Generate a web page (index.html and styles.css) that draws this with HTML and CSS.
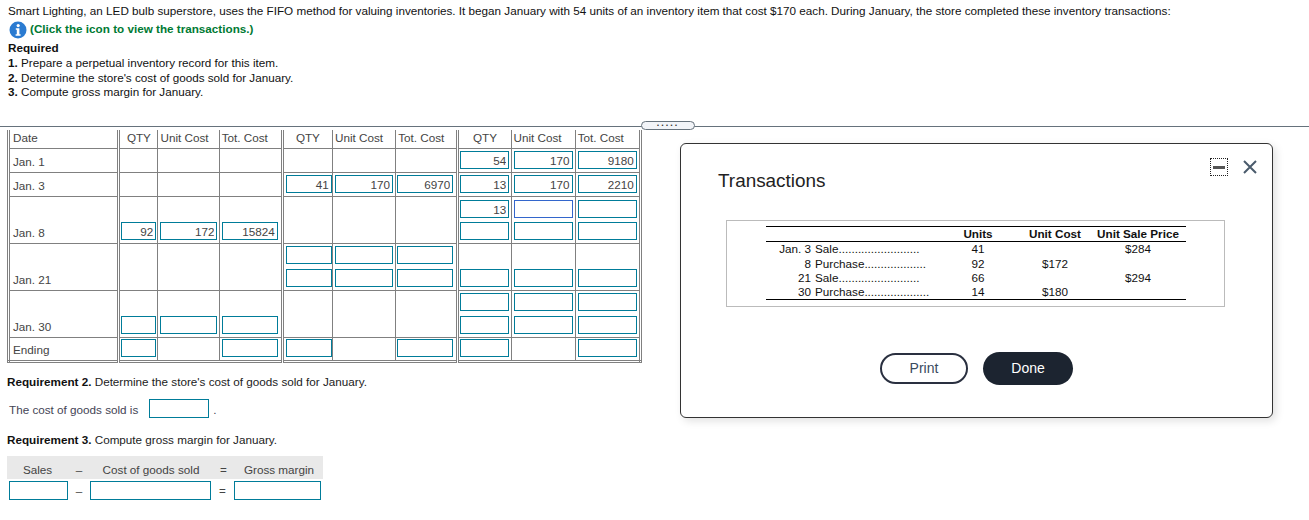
FILE: index.html
```html
<!DOCTYPE html>
<html lang="en">
<head>
<meta charset="utf-8">
<title>Smart Lighting inventory</title>
<link rel="stylesheet" href="styles.css">
</head>
<body>
<section class="question">
  <p class="intro">Smart Lighting, an LED bulb superstore, uses the FIFO method for valuing inventories. It began January with 54 units of an inventory item that cost $170 each. During January, the store completed these inventory transactions:</p>
  <p class="hint">
    <svg class="info" viewBox="0 0 18 18" aria-hidden="true"><circle cx="9" cy="9" r="8.5" fill="#2a7bd1"/><circle cx="9.2" cy="4.6" r="1.6" fill="#fff"/><path d="M6.8 7.2h3.6v6h1.2v1.5H6.6v-1.5h1.2V8.7h-1z" fill="#fff"/></svg>
    <b>(Click the icon to view the transactions.)</b>
  </p>
  <p class="req-title">Required</p>
  <ol class="req-list">
    <li><b>1.</b> Prepare a perpetual inventory record for this item.</li>
    <li><b>2.</b> Determine the store's cost of goods sold for January.</li>
    <li><b>3.</b> Compute gross margin for January.</li>
  </ol>
</section>

<div class="divider"><span class="handle">.....</span></div>

<section class="work">
  <table class="record">
    <colgroup>
      <col class="c-date"><col class="c-q1"><col class="c-u1"><col class="c-t1"><col class="c-q2"><col class="c-u2"><col class="c-t2"><col class="c-q3"><col class="c-u3"><col class="c-t3">
    </colgroup>
    <thead>
      <tr class="r-head">
        <th class="date">Date</th><th class="qty sec">QTY</th><th>Unit Cost</th><th>Tot. Cost</th>
        <th class="qty sec">QTY</th><th>Unit Cost</th><th>Tot. Cost</th>
        <th class="qty sec">QTY</th><th>Unit Cost</th><th>Tot. Cost</th>
      </tr>
    </thead>
    <tbody>
      <tr class="r-one">
        <td class="date">Jan. 1</td><td class="sec"></td><td></td><td></td><td class="sec"></td><td></td><td></td>
        <td class="sec"><input class="w-q3" value="54"></td><td><input class="w-u3" value="170"></td><td><input class="w-t3" value="9180"></td>
      </tr>
      <tr class="r-one">
        <td class="date">Jan. 3</td><td class="sec"></td><td></td><td></td>
        <td class="sec"><input class="w-q2" value="41"></td><td><input class="w-u2" value="170"></td><td><input class="w-t2" value="6970"></td>
        <td class="sec"><input class="w-q3" value="13"></td><td><input class="w-u3" value="170"></td><td><input class="w-t3" value="2210"></td>
      </tr>
      <tr class="r-two">
        <td class="date">Jan. 8</td>
        <td class="sec"><input class="w-q1" value="92"></td><td><input class="w-u1" value="172"></td><td><input class="w-t1" value="15824"></td>
        <td class="sec"></td><td></td><td></td>
        <td class="sec"><div class="stack"><input class="w-q3" value="13"><input class="w-q3"></div></td>
        <td><div class="stack"><input class="w-u3 focus"><input class="w-u3"></div></td>
        <td><div class="stack"><input class="w-t3"><input class="w-t3"></div></td>
      </tr>
      <tr class="r-two">
        <td class="date">Jan. 21</td><td class="sec"></td><td></td><td></td>
        <td class="sec"><div class="stack wide"><input class="w-q2"><input class="w-q2"></div></td>
        <td><div class="stack wide"><input class="w-u2"><input class="w-u2"></div></td>
        <td><div class="stack wide"><input class="w-t2"><input class="w-t2"></div></td>
        <td class="sec"><input class="w-q3"></td><td><input class="w-u3"></td><td><input class="w-t3"></td>
      </tr>
      <tr class="r-two">
        <td class="date">Jan. 30</td>
        <td class="sec"><input class="w-q1"></td><td><input class="w-u1"></td><td><input class="w-t1"></td>
        <td class="sec"></td><td></td><td></td>
        <td class="sec"><div class="stack wide"><input class="w-q3"><input class="w-q3"></div></td>
        <td><div class="stack wide"><input class="w-u3"><input class="w-u3"></div></td>
        <td><div class="stack wide"><input class="w-t3"><input class="w-t3"></div></td>
      </tr>
      <tr class="r-one r-last">
        <td class="date">Ending</td>
        <td class="sec"><input class="w-q1"></td><td></td><td><input class="w-t1"></td>
        <td class="sec"><input class="w-q2"></td><td></td><td><input class="w-t2"></td>
        <td class="sec"><input class="w-q3"></td><td></td><td><input class="w-t3"></td>
      </tr>
    </tbody>
  </table>

  <p class="req-head"><b>Requirement 2.</b> Determine the store's cost of goods sold for January.</p>
  <p class="cogs"><span class="cogs-label">The cost of goods sold is</span><input class="w-cogs"><span class="period">.</span></p>
  <p class="req-head req-3"><b>Requirement 3.</b> Compute gross margin for January.</p>
  <div class="margin">
    <span class="m-sales">Sales</span><span class="m-op">&ndash;</span><span class="m-cogs">Cost of goods sold</span><span class="m-eq">=</span><span class="m-gross">Gross margin</span>
  </div>
  <div class="margin-in">
    <input class="i-sales"><span class="m-op">&ndash;</span><input class="i-cogs"><span class="m-eq">=</span><input class="i-gross">
  </div>
</section>

<aside class="modal">
  <div class="controls">
    <span class="min"><i></i></span>
    <svg class="close" viewBox="0 0 14 14" aria-hidden="true"><path d="M1 1l12 12M13 1L1 13" stroke="#4a5b6c" stroke-width="2" fill="none"/></svg>
  </div>
  <h2>Transactions</h2>
  <div class="tx-box">
    <table class="tx">
      <thead>
        <tr><th class="tx-a"></th><th class="tx-b"></th><th class="tx-u">Units</th><th class="tx-c">Unit Cost</th><th class="tx-p">Unit Sale Price</th></tr>
      </thead>
      <tbody>
        <tr><td class="tx-a">Jan. 3</td><td class="tx-b">Sale.........................</td><td class="tx-u">41</td><td class="tx-c"></td><td class="tx-p">$284</td></tr>
        <tr><td class="tx-a">8</td><td class="tx-b">Purchase...................</td><td class="tx-u">92</td><td class="tx-c">$172</td><td class="tx-p"></td></tr>
        <tr><td class="tx-a">21</td><td class="tx-b">Sale.........................</td><td class="tx-u">66</td><td class="tx-c"></td><td class="tx-p">$294</td></tr>
        <tr><td class="tx-a">30</td><td class="tx-b">Purchase....................</td><td class="tx-u">14</td><td class="tx-c">$180</td><td class="tx-p"></td></tr>
      </tbody>
    </table>
  </div>
  <div class="actions">
    <button class="print" type="button">Print</button>
    <button class="done" type="button">Done</button>
  </div>
</aside>
</body>
</html>
```

FILE: styles.css
```css
* { box-sizing: border-box; }
html, body { margin: 0; padding: 0; }
body {
  position: relative;
  width: 1309px;
  height: 520px;
  overflow: hidden;
  background: #fff;
  color: #111;
  font: 11.7px/15px "Liberation Sans", Arial, sans-serif;
}
p, ol, h2 { margin: 0; padding: 0; }
.question { padding: 3px 8px 0; height: 121px; }
.intro { white-space: nowrap; }
.hint { display: flex; align-items: center; gap: 3px; height: 18px; margin-top: 1px; padding-left: 1px; color: #007a33; }
.info { width: 18px; height: 18px; flex: none; margin-top: 3px; }
.req-title { font-weight: bold; margin-top: 3px; }
.req-list { list-style: none; }
.req-list li { height: 14.7px; }

.divider { position: relative; height: 6px; }
.divider::before { content: ""; display: block; position: absolute; left: 0; right: 0; top: 5px; height: 1px; background: #66727c; }
.handle {
  position: absolute; left: 641px; top: 0; width: 54px; height: 9px;
  background: #f2f4f8; border: 1px solid #66727c; border-radius: 5px;
  font-size: 9px; line-height: 3px; font-weight: bold; text-align: center; letter-spacing: 2px; color: #333;
}

.work { padding: 3px 7px 0; }
.record { border-collapse: collapse; table-layout: fixed; width: 635px; border-left: 3px double #808080; border-right: 3px double #808080; border-bottom: 3px double #808080; color: #444; }
.c-date { width: 110px; }
.c-q1 { width: 39px; } .c-u1 { width: 61px; } .c-t1 { width: 63px; }
.c-q2 { width: 50px; } .c-u2 { width: 63px; } .c-t2 { width: 62px; }
.c-q3 { width: 53px; } .c-u3 { width: 64px; } .c-t3 { width: 65px; }
.record th, .record td { border: 1px solid #808080; padding: 0; vertical-align: bottom; }
.record th { border-top: 0; font-weight: normal; text-align: left; padding: 0 0 3px 2px; }
.record th.qty { text-align: center; padding-left: 0; }
.record .date { padding: 0 0 3px 3px; }
.record th.date { padding-bottom: 3px; }
.record .sec { border-left: 3px double #808080; }
.r-head { height: 18px; }
.r-one { height: 24px; }
.r-two { height: 47px; }
.r-last { height: 24px; }
.record input, .cogs input, .margin-in input {
  display: block; height: 18px; padding: 0 2px 0 0; border: 1px solid #007c99; border-radius: 0;
  background: #fff; color: #444; font: 11.7px "Liberation Sans", Arial, sans-serif; text-align: right; outline: 0;
}
.record td > input { margin: 0 0 3px 2px; }
.stack { display: flex; flex-direction: column; gap: 4px; margin: 0 0 3px 2px; }
.stack.wide { gap: 5px; }
.stack input { flex: none; }
.record input.focus { border-color: #3366cc; }
.w-q1 { width: 35px; } .w-u1 { width: 57px; } .w-t1 { width: 56px; }
.w-q2 { width: 46px; } .w-u2 { width: 58px; } .w-t2 { width: 56px; }
.w-q3 { width: 49px; } .w-u3 { width: 59px; } .w-t3 { width: 59px; }
.record td > input.w-q1, .record td > input.w-t2, .record td > input.w-q3 { margin-left: 1px; }
.stack > input.w-t2, .stack > input.w-q3 { margin-left: -1px; }

.req-head { color: #222; margin-top: 11px; }
.req-head b { color: #111; }
.cogs { display: flex; align-items: center; height: 19px; margin-top: 10px; padding-left: 2px; color: #445; }
.cogs-label { padding-top: 2px; }
.cogs input { width: 60px; height: 19px; margin-left: 11px; }
.cogs .period { margin-left: 4px; padding-top: 2px; }
.req-3 { margin-top: 14px; }
.margin { display: flex; align-items: center; width: 316px; height: 23px; margin-top: 9px; padding-top: 3px; background: #e9e9e9; color: #444; text-align: center; }
.margin-in { display: flex; align-items: center; height: 19px; margin-top: 2px; padding-left: 2px; color: #444; }
.margin-in input { height: 19px; }
.m-sales { width: 61px; }
.m-op { width: 22px; text-align: center; }
.m-cogs { width: 122px; }
.m-eq { width: 23px; text-align: center; }
.m-gross { width: 88px; }
.i-sales { width: 59px; }
.i-cogs { width: 121px; }
.i-gross { width: 87px; }

.modal {
  position: absolute; left: 680px; top: 143px; width: 593px; height: 275px;
  background: #fff; border: 1px solid #333; border-radius: 6px;
  box-shadow: 3px 3px 8px rgba(0,0,0,.12);
  padding: 26px 37px 0;
}
.controls { position: absolute; top: 14px; left: 529px; display: flex; align-items: center; gap: 15px; }
.min { display: flex; align-items: center; justify-content: center; width: 18px; height: 18px; border: 1px dotted #222; }
.min i { display: block; width: 12px; height: 3px; background: #555; }
.close { width: 14px; height: 14px; }
.modal h2 { font-size: 18.9px; line-height: 22px; font-weight: normal; color: #222; }
.tx-box { width: 499px; height: 87px; margin: 28px 0 0 8px; padding: 5px 38px 0 39px; border: 1px solid #bbb; }
.tx { width: 420px; border-collapse: collapse; table-layout: fixed; color: #111; line-height: 14.3px; border-top: 1px solid #000; border-bottom: 1px solid #000; }
.tx th, .tx td { padding: 0; font-weight: normal; text-align: center; white-space: nowrap; overflow: hidden; }
.tx thead th { font-weight: bold; height: 14px; border-bottom: 1px solid #000; }
.tx .tx-a { width: 49px; text-align: right; padding-right: 4px; }
.tx .tx-b { width: 142px; text-align: left; }
.tx .tx-u { width: 42px; }
.tx .tx-c { width: 98px; padding-left: 14px; }
.tx .tx-p { width: 89px; padding-right: 7px; }
.actions { display: flex; align-items: center; gap: 15px; margin: 45px 0 0 162px; }
.actions button { font: 14px "Liberation Sans", Arial, sans-serif; border-radius: 17px; padding: 0 0 2px; }
.print { width: 88px; height: 31px; background: #fff; border: 2px solid #2a3040; color: #3a4a5e; }
.done { width: 90px; height: 33px; background: #1c2430; border: 0; color: #fff; }
```
